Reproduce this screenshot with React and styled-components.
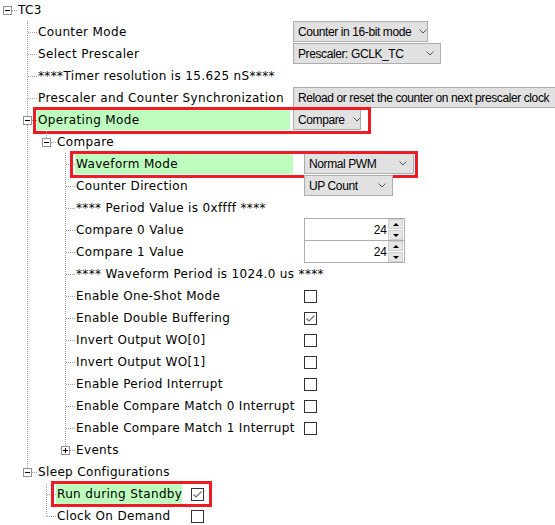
import React from 'react';
import styled, { createGlobalStyle } from 'styled-components';

const LINE = '#a0a0a0';
const dotsDown = `repeating-linear-gradient(to bottom, ${LINE} 0 1px, transparent 1px 2px)`;
const dotsRight = `repeating-linear-gradient(to right, ${LINE} 0 1px, transparent 1px 2px)`;
const CONTROL_FONT = '12px "Liberation Sans", Arial, sans-serif';

const GlobalStyle = createGlobalStyle`
  html, body {
    margin: 0;
    padding: 0;
    background: #fff;
    overflow: hidden;
  }
  body {
    font-family: "DejaVu Sans", Verdana, sans-serif;
    font-size: 12px;
    letter-spacing: 0.35px;
    color: #000;
  }
`;

const Tree = styled.div`
  margin-top: -1px;
  width: 555px;
  overflow: hidden;
`;

const Row = styled.div`
  position: relative;
  display: grid;
  grid-template-columns: ${p => p.$controlX}px max-content;
  height: 22px;
`;

const LabelCell = styled.div`
  display: flex;
  min-width: 0;
  padding-right: ${p => p.$gap}px;
`;

const Guide = styled.span`
  flex: none;
  width: ${p => p.$w}px;
  background: ${p => (p.$line ? `${dotsDown} 7px 0 / 1px 100% no-repeat` : 'none')};
`;

const stem = {
  full: `${dotsDown} 7px 0 / 1px 100% no-repeat`,
  top: `${dotsDown} 7px 0 / 1px 11px no-repeat`,
  none: 'none',
};

const Elbow = styled.span`
  flex: none;
  box-sizing: border-box;
  width: 17px;
  padding: 7px 0 0 3px;
  background: ${dotsRight} 8px 11px / 9px 1px no-repeat, ${p => stem[p.$stem]};
`;

const Expander = styled.span`
  display: grid;
  place-items: center;
  box-sizing: border-box;
  width: 9px;
  height: 9px;
  border: 1px solid #919191;
  background: #fff;

  &::before,
  &::after {
    content: '';
    grid-area: 1 / 1;
    background: #000;
  }
  &::before {
    width: 5px;
    height: 1px;
  }
  &::after {
    width: 1px;
    height: 5px;
    display: ${p => (p.$open ? 'none' : 'block')};
  }
`;

const Label = styled.span`
  flex: 1;
  display: flex;
  align-items: center;
  margin: 1px 0;
  padding-left: 1px;
  white-space: nowrap;
  background: ${p => (p.$hl ? '#bdfdbd' : 'transparent')};
`;

const Select = styled.div`
  display: flex;
  align-items: center;
  justify-content: space-between;
  box-sizing: border-box;
  width: ${p => p.$w}px;
  height: 21px;
  padding: 0 6px 0 4px;
  background: #e1e1e1;
  border: 1px solid #adadad;
  font: ${CONTROL_FONT};
  letter-spacing: -0.4px;
  white-space: nowrap;
`;

const Chevron = styled.svg`
  flex: none;
  margin-left: 8px;
`;

const Spin = styled.div`
  display: flex;
  box-sizing: border-box;
  width: 101px;
  height: 23px;
  margin-top: -1px;
  padding-right: 1px;
  border: 1px solid #adadad;
  background: #fff;
  font: ${CONTROL_FONT};
  letter-spacing: 0;
`;

const SpinValue = styled.span`
  flex: 1;
  align-self: center;
  text-align: right;
  padding-right: 1px;
`;

const SpinButtons = styled.span`
  display: flex;
  flex-direction: column;
  gap: 1px;
  width: 15px;
`;

const SpinButton = styled.span`
  flex: 1;
  display: grid;
  place-items: center;
  box-sizing: border-box;
  background: #e6e6e6;
  border: 1px solid #cfcfcf;

  &::before {
    content: '';
    border-left: 3px solid transparent;
    border-right: 3px solid transparent;
    ${p => (p.$down ? 'border-top: 3px solid #000;' : 'border-bottom: 3px solid #000;')}
  }
`;

const Check = styled.span`
  display: grid;
  place-items: center;
  box-sizing: border-box;
  width: 13px;
  height: 13px;
  margin-top: 5px;
  border: 1px solid #333;
  background: #fff;
`;

const Marker = styled.span`
  position: absolute;
  top: -2px;
  left: ${p => p.$left}px;
  width: ${p => p.$right - p.$left}px;
  height: ${p => p.$h}px;
  box-sizing: border-box;
  border: 3px solid #ed1c24;
  pointer-events: none;
`;

const sel = (text, w) => ({ type: 'select', text, w });
const spin = value => ({ type: 'spin', value });
const check = checked => ({ type: 'check', checked });

const compareCols = { x: 304, gap: 11 };

const root = {
  label: 'TC3',
  open: true,
  cols: { x: 293, gap: 3 },
  children: [
    { label: 'Counter Mode', control: sel('Counter in 16-bit mode', 135) },
    { label: 'Select Prescaler', control: sel('Prescaler: GCLK_TC', 148) },
    { label: '****Timer resolution is 15.625 nS****' },
    {
      label: 'Prescaler and Counter Synchronization',
      control: sel('Reload or reset the counter on next prescaler clock', 290),
    },
    {
      label: 'Operating Mode',
      open: true,
      hl: true,
      mark: { left: 33, right: 371, h: 27 },
      control: sel('Compare', 68),
      cols: compareCols,
      children: [
        {
          label: 'Compare',
          open: true,
          cols: compareCols,
          children: [
            {
              label: 'Waveform Mode',
              hl: true,
              mark: { left: 70, right: 418, h: 27 },
              control: sel('Normal PWM', 110),
            },
            { label: 'Counter Direction', control: sel('UP Count', 89) },
            { label: '**** Period Value is 0xffff ****' },
            { label: 'Compare 0 Value', control: spin(24) },
            { label: 'Compare 1 Value', control: spin(24) },
            { label: '**** Waveform Period is 1024.0 us ****' },
            { label: 'Enable One-Shot Mode', control: check(false) },
            { label: 'Enable Double Buffering', control: check(true) },
            { label: 'Invert Output WO[0]', control: check(false) },
            { label: 'Invert Output WO[1]', control: check(false) },
            { label: 'Enable Period Interrupt', control: check(false) },
            { label: 'Enable Compare Match 0 Interrupt', control: check(false) },
            { label: 'Enable Compare Match 1 Interrupt', control: check(false) },
            { label: 'Events', open: false, children: [] },
          ],
        },
      ],
    },
    {
      label: 'Sleep Configurations',
      open: true,
      cols: { x: 191, gap: 10 },
      children: [
        {
          label: 'Run during Standby',
          hl: true,
          mark: { left: 51, right: 212, h: 26 },
          control: check(true),
        },
        { label: 'Clock On Demand', control: check(false) },
      ],
    },
  ],
};

function flatten(node, level, guides, isLast, cols, out) {
  out.push({ node, level, guides, isLast, cols });
  if (node.children && node.open) {
    node.children.forEach((child, i) =>
      flatten(child, level + 1, [...guides, !isLast], i === node.children.length - 1, node.cols, out)
    );
  }
  return out;
}

const rows = flatten(root, 0, [], true, root.cols, []);

const guideWidth = i => (i === 0 ? 20 : 19);

function Control({ control }) {
  if (!control) return null;
  if (control.type === 'select') {
    return (
      <Select $w={control.w}>
        <span>{control.text}</span>
        <Chevron width="8" height="5" viewBox="0 0 8 5">
          <path d="M0.5 0.5 L4 4 L7.5 0.5" fill="none" stroke="#555" strokeWidth="1" />
        </Chevron>
      </Select>
    );
  }
  if (control.type === 'spin') {
    return (
      <Spin>
        <SpinValue>{control.value}</SpinValue>
        <SpinButtons>
          <SpinButton />
          <SpinButton $down />
        </SpinButtons>
      </Spin>
    );
  }
  return (
    <Check>
      {control.checked && (
        <svg width="11" height="11" viewBox="0 0 11 11">
          <path d="M1.5 5.5 L4 8 L9.5 2.5" fill="none" stroke="#6d6d6d" strokeWidth="1.2" />
        </svg>
      )}
    </Check>
  );
}

export default function App() {
  return (
    <>
      <GlobalStyle />
      <Tree>
        {rows.map(({ node, level, guides, isLast, cols }, idx) => (
          <Row key={idx} $controlX={cols.x}>
            <LabelCell $gap={cols.gap}>
              {guides.map((line, i) => (
                <Guide key={i} $w={guideWidth(i)} $line={line} />
              ))}
              <Elbow $stem={level === 0 ? 'none' : isLast ? 'top' : 'full'}>
                {node.children && <Expander $open={node.open} />}
              </Elbow>
              <Label $hl={node.hl}>{node.label}</Label>
            </LabelCell>
            <Control control={node.control} />
            {node.mark && <Marker $left={node.mark.left} $right={node.mark.right} $h={node.mark.h} />}
          </Row>
        ))}
      </Tree>
    </>
  );
}
